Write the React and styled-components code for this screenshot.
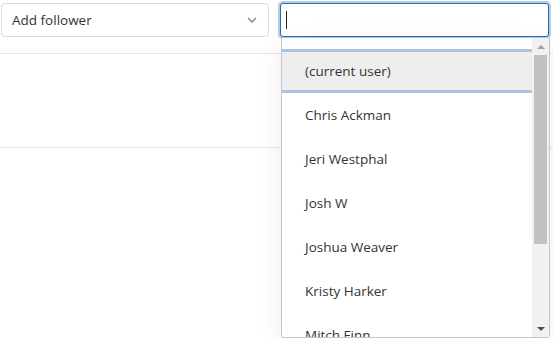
import styled, { createGlobalStyle } from "styled-components"

const GlobalStyle = createGlobalStyle`
    body {
        margin: 0;
        background: #fff;
        font-family: "Open Sans", "Noto Sans", sans-serif;
        color: #333;
    }
`

const users = [
    "(current user)",
    "Chris Ackman",
    "Jeri Westphal",
    "Josh W",
    "Joshua Weaver",
    "Kristy Harker",
    "Mitch Finn",
]

export default function App() {
    return (
        <Page>
            <GlobalStyle />
            <Toolbar>
                <Select>
                    <span>Add follower</span>
                    <svg width="10" height="6" viewBox="0 0 10 6">
                        <path d="M1 1l4 4 4-4" fill="none" stroke="#888" strokeWidth="1.5" />
                    </svg>
                </Select>
                <SearchWrap>
                    <SearchBox>
                        <Caret />
                    </SearchBox>
                    <Dropdown>
                        <List>
                            {users.map((u, i) => (
                                <Item key={u} $active={i === 0}>{u}</Item>
                            ))}
                        </List>
                        <Scrollbar>
                            <Arrow>
                                <svg width="8" height="4" viewBox="0 0 8 4"><path d="M0 4L4 0L8 4Z" fill="#a3a3a3" /></svg>
                            </Arrow>
                            <Track>
                                <Thumb />
                            </Track>
                            <Arrow>
                                <svg width="8" height="4" viewBox="0 0 8 4"><path d="M0 0L8 0L4 4Z" fill="#505050" /></svg>
                            </Arrow>
                        </Scrollbar>
                    </Dropdown>
                </SearchWrap>
            </Toolbar>
            <Section />
        </Page>
    )
}

const Page = styled.div`
    position: relative;
    width: 553px;
    height: 338px;
    overflow: hidden;
`
const Toolbar = styled.div`
    display: flex;
    align-items: flex-start;
    gap: 11px;
    padding: 3px 0 16px 1px;
`
const Select = styled.div`
    box-sizing: border-box;
    width: 268px;
    height: 34px;
    display: flex;
    align-items: center;
    justify-content: space-between;
    padding: 0 11px 0 10px;
    border: 1px solid #dcdcdc;
    border-radius: 4px;
    font-size: 13.5px;
    color: #333;
`
const SearchWrap = styled.div`
    position: relative;
    width: 269px;
`
const SearchBox = styled.div`
    box-sizing: border-box;
    height: 34px;
    display: flex;
    align-items: center;
    padding-left: 5px;
    border: 1px solid #2d6cab;
    border-radius: 3px;
    box-shadow: 0 0 0 2px #b4cde6;
    background: #fff;
`
const Caret = styled.span`
    width: 1px;
    height: 18px;
    background: #222;
`
const Dropdown = styled.div`
    position: absolute;
    top: 35px;
    left: 1px;
    box-sizing: border-box;
    width: 269px;
    height: 300px;
    display: flex;
    background: #fff;
    border: 1px solid #c6c6c6;
    border-top: none;
    border-radius: 0 0 3px 3px;
    box-shadow: 0 6px 28px rgba(0, 0, 0, 0.07);
    z-index: 2;
`
const List = styled.div`
    flex: 1;
    overflow: hidden;
    padding-top: 11px;
`
const Item = styled.div`
    box-sizing: border-box;
    height: 44px;
    display: flex;
    align-items: center;
    padding-left: 23px;
    font-size: 13.5px;
    color: #333;
    background: ${p => (p.$active ? "#eeeeee" : "transparent")};
    border-top: 3px solid ${p => (p.$active ? "#a8c4de" : "transparent")};
    border-bottom: 3px solid ${p => (p.$active ? "#a8c4de" : "transparent")};
`
const Scrollbar = styled.div`
    width: 17px;
    display: flex;
    flex-direction: column;
    background: #f1f1f1;
`
const Arrow = styled.div`
    height: 17px;
    display: flex;
    align-items: center;
    justify-content: center;
`
const Track = styled.div`
    flex: 1;
    padding: 0 2px;
`
const Thumb = styled.div`
    height: 189px;
    background: #c1c1c1;
`
const Section = styled.div`
    height: 93px;
    border-top: 1px solid #e6e6e6;
    border-bottom: 1px solid #e6e6e6;
`
